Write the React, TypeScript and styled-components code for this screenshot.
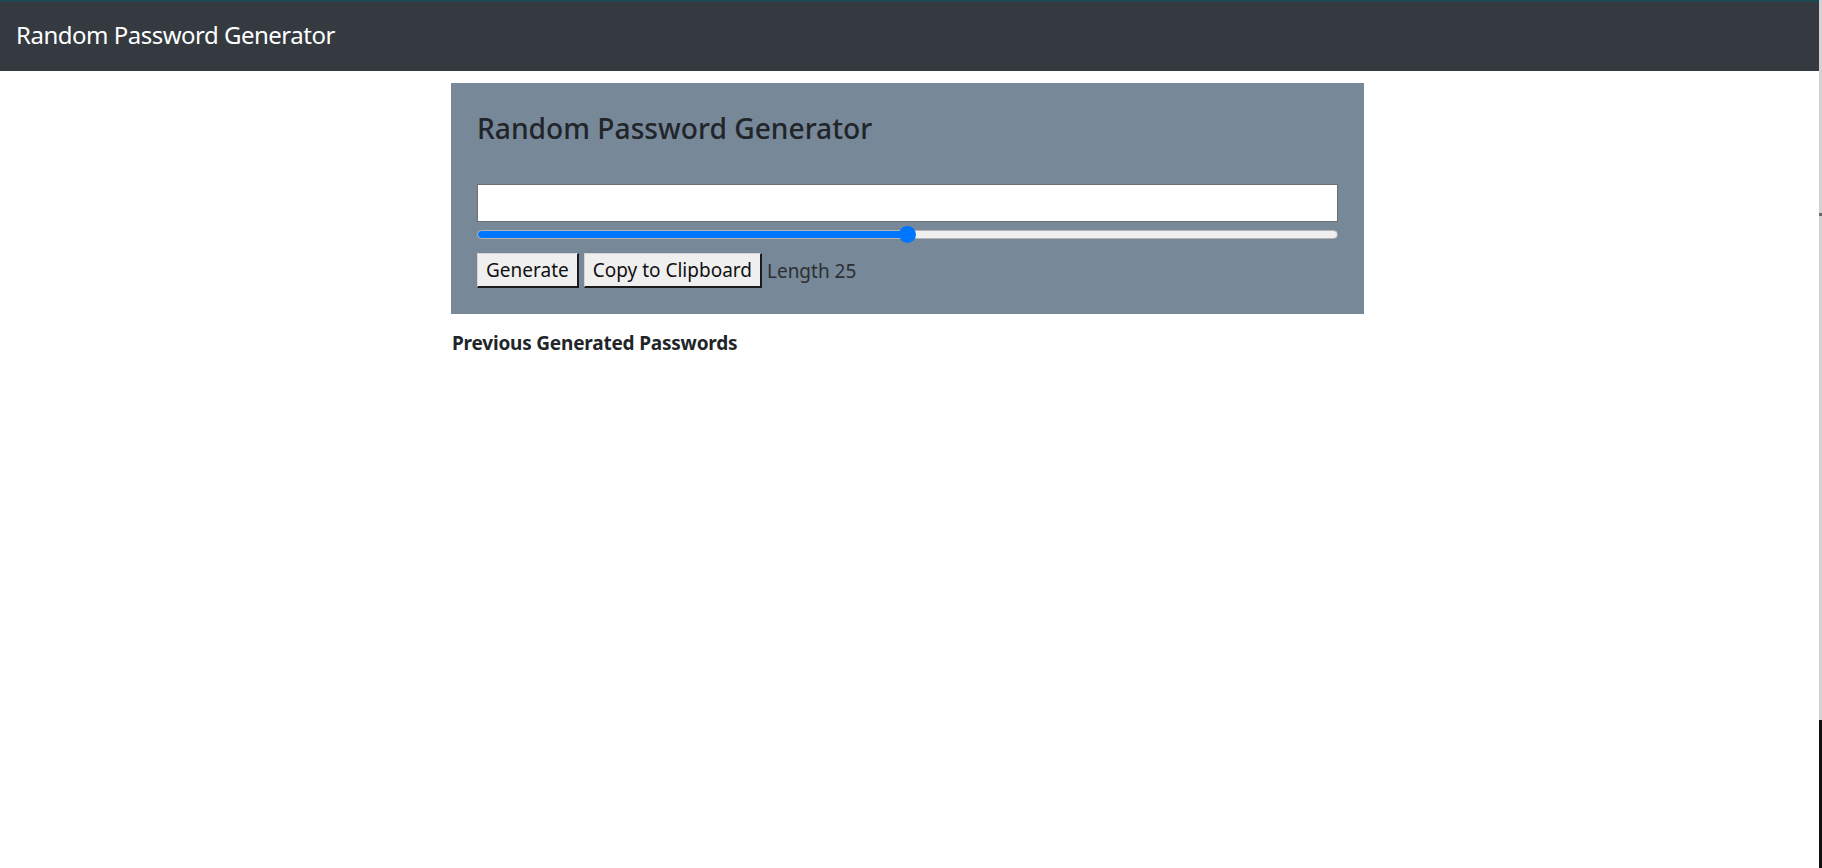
import React, { useState } from "react";
import styled, { createGlobalStyle } from "styled-components";

const GlobalStyle = createGlobalStyle`
  html, body { margin: 0; padding: 0; background: #ffffff; }
  body {
    font-family: "Noto Sans", "Open Sans", Arial, sans-serif;
    color: #212529;
    overflow: hidden;
  }
  * { box-sizing: border-box; }
`;

const Page = styled.div`
  display: flex;
  min-height: 100vh;
`;

const Main = styled.div`
  flex: 1;
  min-width: 0;
`;

const EdgeStrip = styled.div`
  width: 3px;
  flex: none;
  background: linear-gradient(
    to bottom,
    #d2d2d2 0,
    #d2d2d2 213px,
    #6a6a6a 213px,
    #6a6a6a 216px,
    #d2d2d2 216px,
    #d2d2d2 720px,
    #111111 720px
  );
`;

const Navbar = styled.header`
  height: 71px;
  background: #343a40;
  border-top: 2px solid #1d4a50;
  display: flex;
  align-items: center;
  padding-left: 16px;
`;

const Brand = styled.span`
  color: #ffffff;
  font-size: 24px;
  letter-spacing: -0.5px;
  line-height: 1;
  margin-top: -3px;
`;

const Body = styled.div`
  padding-right: 4px;
`;

const Container = styled.main`
  width: 913px;
  margin: 12px auto 0;
`;

const Card = styled.section`
  background: #778899;
  padding: 27px 26px 26px 26px;
`;

const Title = styled.h4`
  margin: 0;
  font-size: 28.2px;
  font-weight: 500;
  line-height: 36px;
  color: #212529;
`;

const PasswordInput = styled.input`
  display: block;
  width: 100%;
  height: 38px;
  margin: 38px 0 0;
  border: 1px solid #6f6f6f;
  background: #ffffff;
  font-size: 19px;
  font-family: inherit;
  padding: 0 6px;
  outline: none;
`;

const Range = styled.input<{ $pct: number }>`
  -webkit-appearance: none;
  appearance: none;
  display: block;
  width: 100%;
  height: 17px;
  margin: 4px 0 0;
  background: transparent;
  outline: none;

  &::-webkit-slider-runnable-track {
    height: 9px;
    border-radius: 5px;
    border: 1px solid #b5b5b5;
    background: linear-gradient(
      to right,
      #0075ff 0,
      #0075ff ${(p) => p.$pct}%,
      #efefef ${(p) => p.$pct}%,
      #efefef 100%
    );
  }
  &::-webkit-slider-thumb {
    -webkit-appearance: none;
    appearance: none;
    width: 17px;
    height: 17px;
    border-radius: 50%;
    background: #0075ff;
    border: none;
    margin-top: -5px;
  }
`;

const Controls = styled.div`
  display: flex;
  align-items: center;
  gap: 5px;
  margin-top: 10px;
`;

const Button = styled.button`
  height: 35px;
  padding: 0 8px;
  font-family: inherit;
  font-size: 19px;
  color: #111;
  background: #efefef;
  border-style: solid;
  border-width: 1px 2px 2px 1px;
  border-color: #d4d4d4 #1a1a1a #1a1a1a #d4d4d4;
  border-radius: 0;
  cursor: pointer;
`;

const LengthLabel = styled.span`
  font-size: 19px;
  color: #2b2f33;
`;

const HistoryTitle = styled.h5`
  margin: 17px 0 0 1px;
  font-size: 19px;
  letter-spacing: -0.2px;
  font-weight: 700;
  line-height: 24px;
  color: #212529;
`;

export default function App() {
  const [length, setLength] = useState(25);
  const min = 0;
  const max = 50;
  const pct = ((length - min) / (max - min)) * 100;

  return (
    <>
      <GlobalStyle />
      <Page>
        <Main>
          <Navbar>
            <Brand>Random Password Generator</Brand>
          </Navbar>
          <Body>
            <Container>
              <Card>
                <Title>Random Password Generator</Title>
                <PasswordInput type="text" readOnly value="" />
                <Range
                  type="range"
                  min={min}
                  max={max}
                  value={length}
                  $pct={pct}
                  onChange={(e) => setLength(Number(e.target.value))}
                />
                <Controls>
                  <Button type="button">Generate</Button>
                  <Button type="button">Copy to Clipboard</Button>
                  <LengthLabel>Length {length}</LengthLabel>
                </Controls>
              </Card>
              <HistoryTitle>Previous Generated Passwords</HistoryTitle>
            </Container>
          </Body>
        </Main>
        <EdgeStrip />
      </Page>
    </>
  );
}
